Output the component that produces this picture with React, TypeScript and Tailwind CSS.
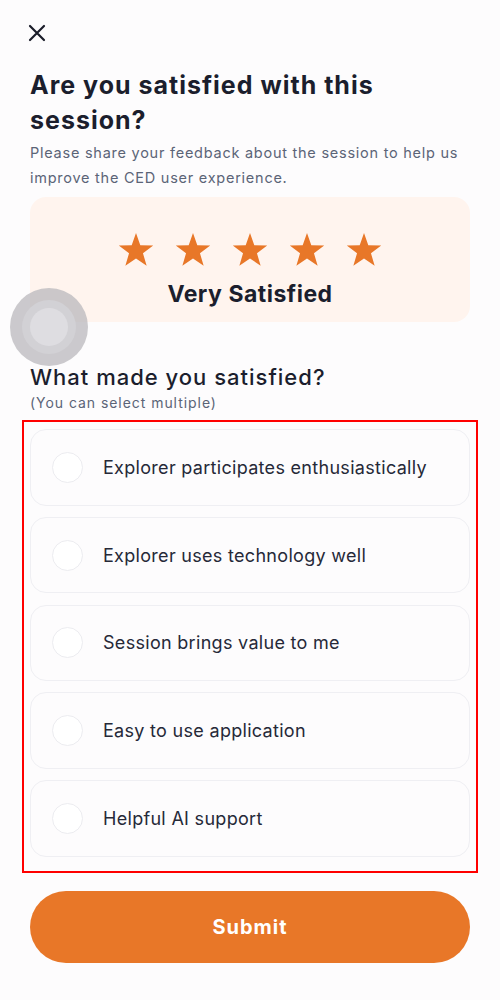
import React from "react";

const Star = () => (
  <svg width="38" height="36" viewBox="0 0 24 23" className="block">
    <path d="M12 0.6 L14.75 8.4 L23 8.6 L16.45 13.6 L18.8 21.6 L12 16.9 L5.2 21.6 L7.55 13.6 L1 8.6 L9.25 8.4 Z" fill="#e87728" />
  </svg>
);

const options = [
  "Explorer participates enthusiastically",
  "Explorer uses technology well",
  "Session brings value to me",
  "Easy to use application",
  "Helpful AI support",
];

export default function App() {
  return (
    <div
      className="relative w-[500px] h-[1000px] bg-[#fdfcfd] overflow-hidden"
      style={{ fontFamily: "Inter, 'Noto Sans', sans-serif" }}
    >
      <div className="px-[30px] pt-[24px]">
        <button className="block w-[16px] h-[16px] ml-[-2px]">
          <svg width="18" height="18" viewBox="0 0 18 18" fill="none">
            <path d="M2 2 L16 16 M16 2 L2 16" stroke="#1b1d2a" strokeWidth="2.2" strokeLinecap="round" />
          </svg>
        </button>
        <h1 className="mt-[28px] text-[25px] leading-[35px] font-bold text-[#1b1e2d] tracking-[1px]">
          Are you satisfied with this session?
        </h1>
        <p className="mt-[2px] text-[14.5px] leading-[25px] text-[#5b6477] tracking-[0.75px]">
          Please share your feedback about the session to help us improve the CED user experience.
        </p>
        <div className="mt-[7px] h-[125px] rounded-[16px] bg-[#fff4ee] flex flex-col items-center pt-[35px]">
          <div className="flex gap-[19px]">
            <Star />
            <Star />
            <Star />
            <Star />
            <Star />
          </div>
          <div className="mt-[12px] text-[23px] leading-[28px] font-bold text-[#1b1e2d] tracking-[0.5px]">
            Very Satisfied
          </div>
        </div>
        <h2 className="mt-[41px] text-[22px] leading-[28px] font-medium text-[#1b1e2d] tracking-[1px]">
          What made you satisfied?
        </h2>
        <p className="mt-[3px] text-[14px] leading-[18px] text-[#5b6477] tracking-[0.95px]">
          (You can select multiple)
        </p>
        <div className="mt-[8px] mx-[-8px] border-2 border-[#ff0000] px-[6px] pt-[7px] pb-[14px] flex flex-col gap-[11.25px]">
          {options.map((o) => (
            <div
              key={o}
              className="h-[76.5px] rounded-[16px] border border-[#efeff3] bg-[#fdfcfd] flex items-center pl-[21px]"
            >
              <div className="w-[31px] h-[31px] rounded-full border border-[#ececf0] bg-white shrink-0" />
              <span className="ml-[20px] text-[18px] text-[#262938] tracking-[0.3px]">{o}</span>
            </div>
          ))}
        </div>
        <button className="mt-[18px] w-full h-[72px] rounded-full bg-[#e87728] text-white text-[20px] font-bold tracking-[1px]">
          Submit
        </button>
      </div>
      <div className="absolute left-[10px] top-[288px] w-[78px] h-[78px] rounded-full bg-[#b9b8bc]/75 flex items-center justify-center">
        <div className="w-[54px] h-[54px] rounded-full bg-[#d2d1d5] flex items-center justify-center">
          <div className="w-[38px] h-[38px] rounded-full bg-[#dedde1]" />
        </div>
      </div>
    </div>
  );
}
